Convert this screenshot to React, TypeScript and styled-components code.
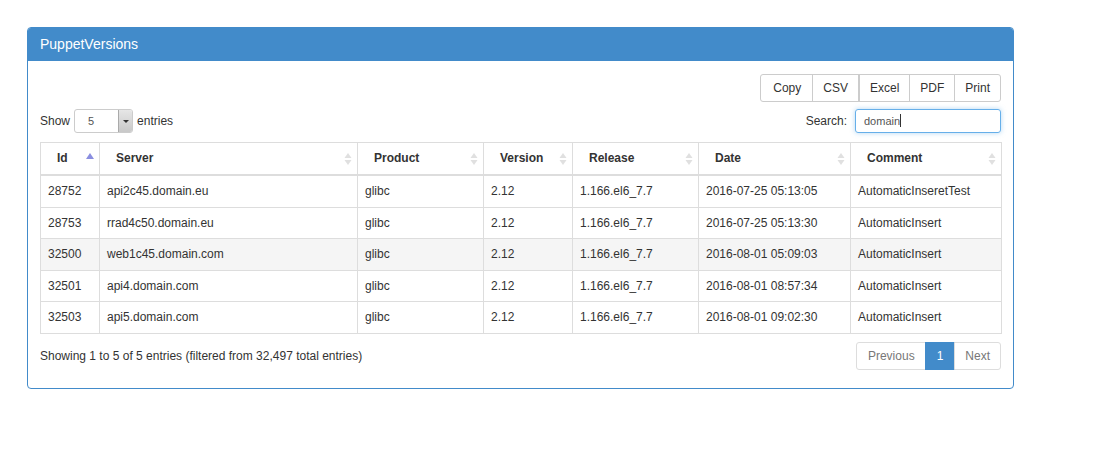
import React from 'react';
import styled, { createGlobalStyle, css } from 'styled-components';

const GlobalStyle = createGlobalStyle`
  body {
    margin: 0;
    background: #fff;
    font-family: "Liberation Sans", Arial, sans-serif;
    color: #333;
  }
`;

const Page = styled.div`
  padding: 27px 84px 0 27px;
`;

const Panel = styled.div`
  width: 985px;
  border: 1px solid #428bca;
  border-radius: 4px;
`;

const PanelHeading = styled.div`
  background: #428bca;
  color: #fff;
  font-size: 14px;
  height: 33px;
  line-height: 33px;
  padding: 0 12px;
  border-radius: 3px 3px 0 0;
`;

const PanelBody = styled.div`
  padding: 13px 12px 18px 12px;
  display: flex;
  flex-direction: column;
`;

const ButtonsRow = styled.div`
  display: flex;
  justify-content: flex-end;
`;

const ButtonGroup = styled.div`
  display: flex;
`;

const Button = styled.button<{ $first?: boolean; $last?: boolean; $thick?: boolean }>`
  font-family: inherit;
  font-size: 12px;
  color: #333;
  background: #fff;
  height: 28px;
  padding: 0 10px;
  border: 1px solid #ccc;
  margin-left: -1px;
  border-radius: 0;
  ${(p) => p.$first && css`border-radius: 3px 0 0 3px; margin-left: 0; padding: 0 11px 0 12px;`}
  ${(p) => p.$last && css`border-radius: 0 3px 3px 0;`}
  ${(p) => p.$thick && css`border-left: 2px solid #ccc; padding: 0 10px 0 10px;`}
`;

const ControlsRow = styled.div`
  display: flex;
  justify-content: space-between;
  align-items: center;
  margin-top: 7px;
  font-size: 12px;
`;

const Label = styled.label`
  display: flex;
  align-items: center;
  gap: 4px;
`;

const Select = styled.div`
  display: flex;
  width: 57px;
  height: 22px;
  border: 1px solid #ccc;
  border-radius: 3px;
  overflow: hidden;
  font-size: 11px;
  color: #555;
`;

const SelectValue = styled.div`
  flex: 1;
  padding-left: 13px;
  line-height: 22px;
`;

const SelectArrow = styled.div`
  width: 13px;
  border-left: 1px solid #aaa;
  background: linear-gradient(#e6e6e6, #c8c8c8);
  display: flex;
  align-items: center;
  justify-content: center;
  &::after {
    content: '';
    border-left: 3px solid transparent;
    border-right: 3px solid transparent;
    border-top: 3px solid #333;
  }
`;

const SearchInput = styled.div`
  width: 132px;
  height: 22px;
  border: 1px solid #66afe9;
  border-radius: 3px;
  box-shadow: 0 0 5px rgba(102, 175, 233, 0.5);
  padding: 0 4px 0 8px;
  font-size: 11px;
  color: #555;
  line-height: 22px;
  margin-left: 4px;
`;

const Caret = styled.span`
  display: inline-block;
  width: 1px;
  height: 13px;
  background: #333;
  vertical-align: -2px;
`;

const Table = styled.table`
  margin-top: 9px;
  width: 961px;
  table-layout: fixed;
  border-collapse: collapse;
  font-size: 12px;
  border: 1px solid #ddd;
`;

const Th = styled.th`
  position: relative;
  text-align: left;
  font-weight: bold;
  padding: 7px 18px 7px 16px;
  line-height: 17px;
  border: 1px solid #ddd;
  border-bottom: 2px solid #ddd;
`;

const SortIcon = styled.svg`
  position: absolute;
  right: 5px;
  top: 10px;
`;

const Row = styled.tr<{ $hover?: boolean }>`
  background: ${(p) => (p.$hover ? '#f5f5f5' : '#fff')};
`;

const Td = styled.td`
  padding: 7px 7px;
  line-height: 16.5px;
  border: 1px solid #ddd;
  white-space: nowrap;
  overflow: hidden;
`;

const FooterRow = styled.div`
  display: flex;
  justify-content: space-between;
  align-items: center;
  margin-top: 8px;
  font-size: 12px;
`;

const Pagination = styled.div`
  display: flex;
`;

const PageLink = styled.span<{ $active?: boolean; $first?: boolean; $last?: boolean }>`
  height: 26px;
  line-height: 26px;
  padding: 0 10px;
  border: 1px solid #ddd;
  margin-left: -1px;
  color: #777;
  background: #fff;
  ${(p) => p.$first && css`border-radius: 3px 0 0 3px; margin-left: 0; padding: 0 10px 0 11px;`}
  ${(p) => p.$last && css`border-radius: 0 3px 3px 0;`}
  ${(p) =>
    p.$active &&
    css`
      background: #428bca;
      border-color: #428bca;
      color: #fff;
      padding: 0 11px;
    `}
`;

const columns = [
  { label: 'Id', width: 59, active: true },
  { label: 'Server', width: 258 },
  { label: 'Product', width: 126 },
  { label: 'Version', width: 89 },
  { label: 'Release', width: 126 },
  { label: 'Date', width: 152 },
  { label: 'Comment', width: 151 },
];

const rows = [
  ['28752', 'api2c45.domain.eu', 'glibc', '2.12', '1.166.el6_7.7', '2016-07-25 05:13:05', 'AutomaticInseretTest'],
  ['28753', 'rrad4c50.domain.eu', 'glibc', '2.12', '1.166.el6_7.7', '2016-07-25 05:13:30', 'AutomaticInsert'],
  ['32500', 'web1c45.domain.com', 'glibc', '2.12', '1.166.el6_7.7', '2016-08-01 05:09:03', 'AutomaticInsert'],
  ['32501', 'api4.domain.com', 'glibc', '2.12', '1.166.el6_7.7', '2016-08-01 08:57:34', 'AutomaticInsert'],
  ['32503', 'api5.domain.com', 'glibc', '2.12', '1.166.el6_7.7', '2016-08-01 09:02:30', 'AutomaticInsert'],
];

const Sort = ({ active }: { active?: boolean }) =>
  active ? (
    <SortIcon width="8" height="12" viewBox="0 0 8 12">
      <path d="M4 0 L8 6 L0 6 Z" fill="#8a8ee0" />
    </SortIcon>
  ) : (
    <SortIcon width="8" height="12" viewBox="0 0 8 12">
      <path d="M4 0 L7.5 5 L0.5 5 Z" fill="#e0e0e0" />
      <path d="M4 12 L7.5 7 L0.5 7 Z" fill="#e0e0e0" />
    </SortIcon>
  );

const App = () => {
  return (
    <Page>
      <GlobalStyle />
      <Panel>
        <PanelHeading>PuppetVersions</PanelHeading>
        <PanelBody>
          <ButtonsRow>
            <ButtonGroup>
              <Button $first>Copy</Button>
              <Button>CSV</Button>
              <Button $thick>Excel</Button>
              <Button>PDF</Button>
              <Button $last>Print</Button>
            </ButtonGroup>
          </ButtonsRow>

          <ControlsRow>
            <Label>
              Show
              <Select>
                <SelectValue>5</SelectValue>
                <SelectArrow />
              </Select>
              entries
            </Label>
            <Label>
              Search:
              <SearchInput>
                domain<Caret />
              </SearchInput>
            </Label>
          </ControlsRow>

          <Table>
            <colgroup>
              {columns.map((c) => (
                <col key={c.label} style={{ width: c.width }} />
              ))}
            </colgroup>
            <thead>
              <tr>
                {columns.map((c) => (
                  <Th key={c.label}>
                    {c.label}
                    <Sort active={c.active} />
                  </Th>
                ))}
              </tr>
            </thead>
            <tbody>
              {rows.map((r, i) => (
                <Row key={r[0]} $hover={i === 2}>
                  {r.map((cell, j) => (
                    <Td key={j}>{cell}</Td>
                  ))}
                </Row>
              ))}
            </tbody>
          </Table>

          <FooterRow>
            <div>Showing 1 to 5 of 5 entries (filtered from 32,497 total entries)</div>
            <Pagination>
              <PageLink $first>Previous</PageLink>
              <PageLink $active>1</PageLink>
              <PageLink $last>Next</PageLink>
            </Pagination>
          </FooterRow>
        </PanelBody>
      </Panel>
    </Page>
  );
};

export default App;
